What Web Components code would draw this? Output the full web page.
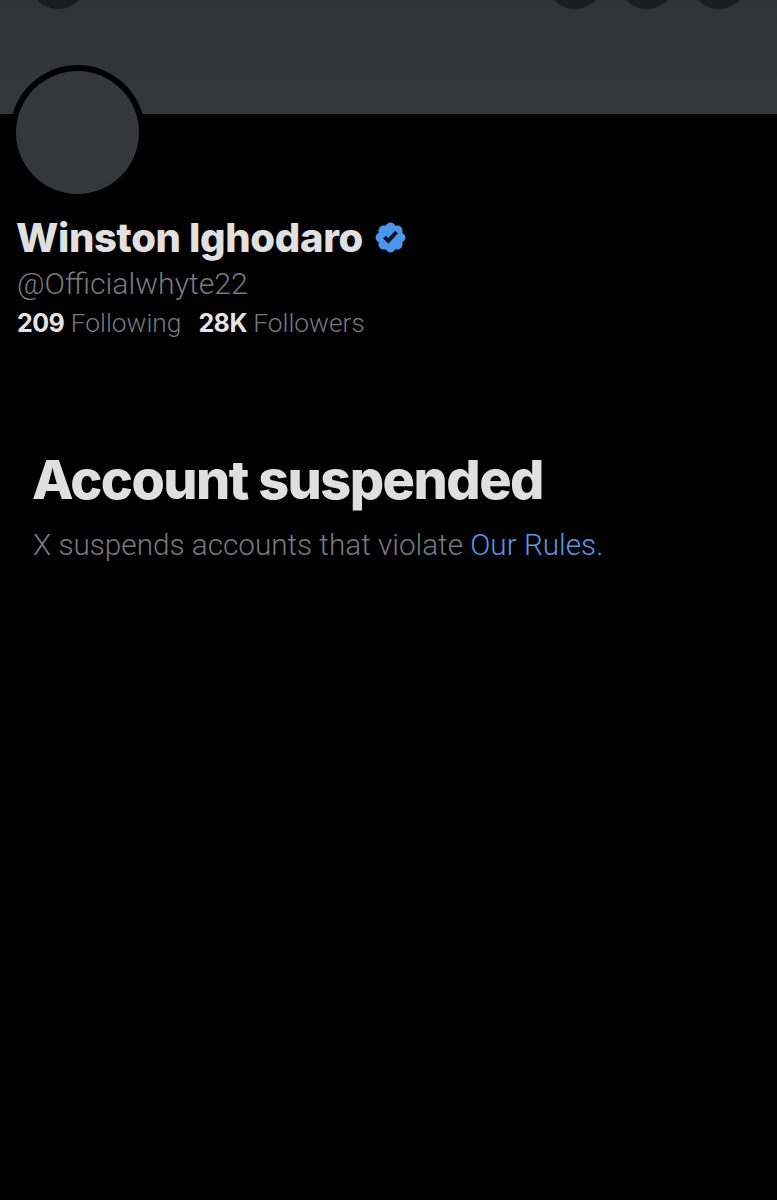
<!DOCTYPE html>
<html lang="en">
<head>
<meta charset="utf-8">
<title>Account suspended</title>
<style>
  html, body { margin: 0; background: #000; }
  body { font-family: Roboto, "Liberation Sans", sans-serif; }
</style>
</head>
<body>
<x-banner></x-banner>
<x-profile handle="@Officialwhyte22">
  <span slot="name">Winston Ighodaro</span>
</x-profile>
<x-notice>
  <span slot="title">Account suspended</span>
  X suspends accounts that violate <a href="#">Our Rules.</a>
</x-notice>

<script>
class XBanner extends HTMLElement {
  constructor() {
    super();
    this.attachShadow({ mode: 'open' });
  }

  connectedCallback() {
    this.shadowRoot.innerHTML = `
      <style>
        :host {
          display: block;
          height: 113px;
          overflow: hidden;
          background: linear-gradient(#303236, #36373b);
          border-bottom: 1px solid #3c3d40;
          box-sizing: content-box;
        }
        .row {
          display: flex;
          gap: 14px;
          margin-top: -49px;
          padding: 0 29px;
        }
        .btn {
          width: 58px;
          height: 58px;
          border-radius: 50%;
          background: #1b1c1f;
        }
        .left { margin-right: auto; }
      </style>
      <div class="row">
        <div class="btn left"></div>
        <div class="btn"></div>
        <div class="btn"></div>
        <div class="btn"></div>
      </div>
    `;
  }
}

class XProfile extends HTMLElement {
  constructor() {
    super();
    this.attachShadow({ mode: 'open' });
  }

  connectedCallback() {
    const handle = this.getAttribute('handle');
    this.shadowRoot.innerHTML = `
      <style>
        :host {
          display: block;
          padding: 0 17px;
        }
        .avatar {
          width: 123px;
          height: 123px;
          margin: -43px 0 0 -1px;
          border-radius: 50%;
          background: #36373b;
          box-shadow: 0 0 0 6px #000;
          position: relative;
        }
        .name {
          display: flex;
          align-items: center;
          gap: 10px;
          margin: 19px 0 0 -1px;
          height: 48px;
          font-family: Inter, "Liberation Sans", sans-serif;
          font-size: 40px;
          font-weight: 800;
          letter-spacing: -0.35px;
          color: #e0e0e0;
        }
        svg { width: 35px; height: 35px; flex: none; }
        .handle {
          margin-top: 5px;
          font-size: 30.2px;
          line-height: 36px;
          font-weight: 300;
          color: #777a7e;
        }
        .stats {
          display: flex;
          gap: 17px;
          margin-top: 3px;
          font-size: 26.3px;
          line-height: 36px;
          font-weight: 300;
          color: #777a7e;
        }
        b {
          font-family: Inter, "Liberation Sans", sans-serif;
          font-size: 25px;
          font-weight: 700;
          letter-spacing: -0.5px;
          color: #e4e4e4;
        }
      </style>
      <div class="avatar"></div>
      <div class="name">
        <slot name="name"></slot>
        <svg viewBox="0 0 24 24" aria-hidden="true">
          <path fill="#4a96ec" d="M22.25 12c0-1.43-.88-2.67-2.19-3.34.46-1.39.2-2.9-.81-3.91s-2.52-1.27-3.91-.81c-.66-1.31-1.91-2.19-3.34-2.19s-2.67.88-3.33 2.19c-1.4-.46-2.91-.2-3.92.81s-1.26 2.52-.8 3.91c-1.31.67-2.2 1.91-2.2 3.34s.89 2.67 2.2 3.34c-.46 1.39-.21 2.9.8 3.91s2.52 1.26 3.91.81c.67 1.31 1.91 2.19 3.34 2.19s2.68-.88 3.34-2.19c1.39.45 2.9.2 3.91-.81s1.27-2.52.81-3.91c1.31-.67 2.19-1.91 2.19-3.34z"/>
          <path fill="#0c1622" d="M10.54 16.2l-3.6-3.6 1.88-1.88 1.66 1.68 4.68-5.1 1.96 1.8z"/>
        </svg>
      </div>
      <div class="handle">${handle}</div>
      <div class="stats">
        <span><b>209</b> Following</span>
        <span><b>28K</b> Followers</span>
      </div>
    `;
  }
}

class XNotice extends HTMLElement {
  constructor() {
    super();
    this.attachShadow({ mode: 'open' });
  }

  connectedCallback() {
    this.shadowRoot.innerHTML = `
      <style>
        :host {
          display: block;
          padding: 107px 33px 0;
          font-size: 29.7px;
          line-height: 40px;
          font-weight: 300;
          color: #777a7e;
        }
        .title {
          font-family: Inter, "Liberation Sans", sans-serif;
          font-size: 54px;
          line-height: 64px;
          font-weight: 800;
          letter-spacing: -1.55px;
          color: #dfdfdf;
          margin: 0 0 13px -1px;
        }
        ::slotted(a) { color: #5598e6; text-decoration: none; }
      </style>
      <div class="title"><slot name="title"></slot></div>
      <div><slot></slot></div>
    `;
  }
}

customElements.define('x-banner', XBanner);
customElements.define('x-profile', XProfile);
customElements.define('x-notice', XNotice);
</script>
</body>
</html>
